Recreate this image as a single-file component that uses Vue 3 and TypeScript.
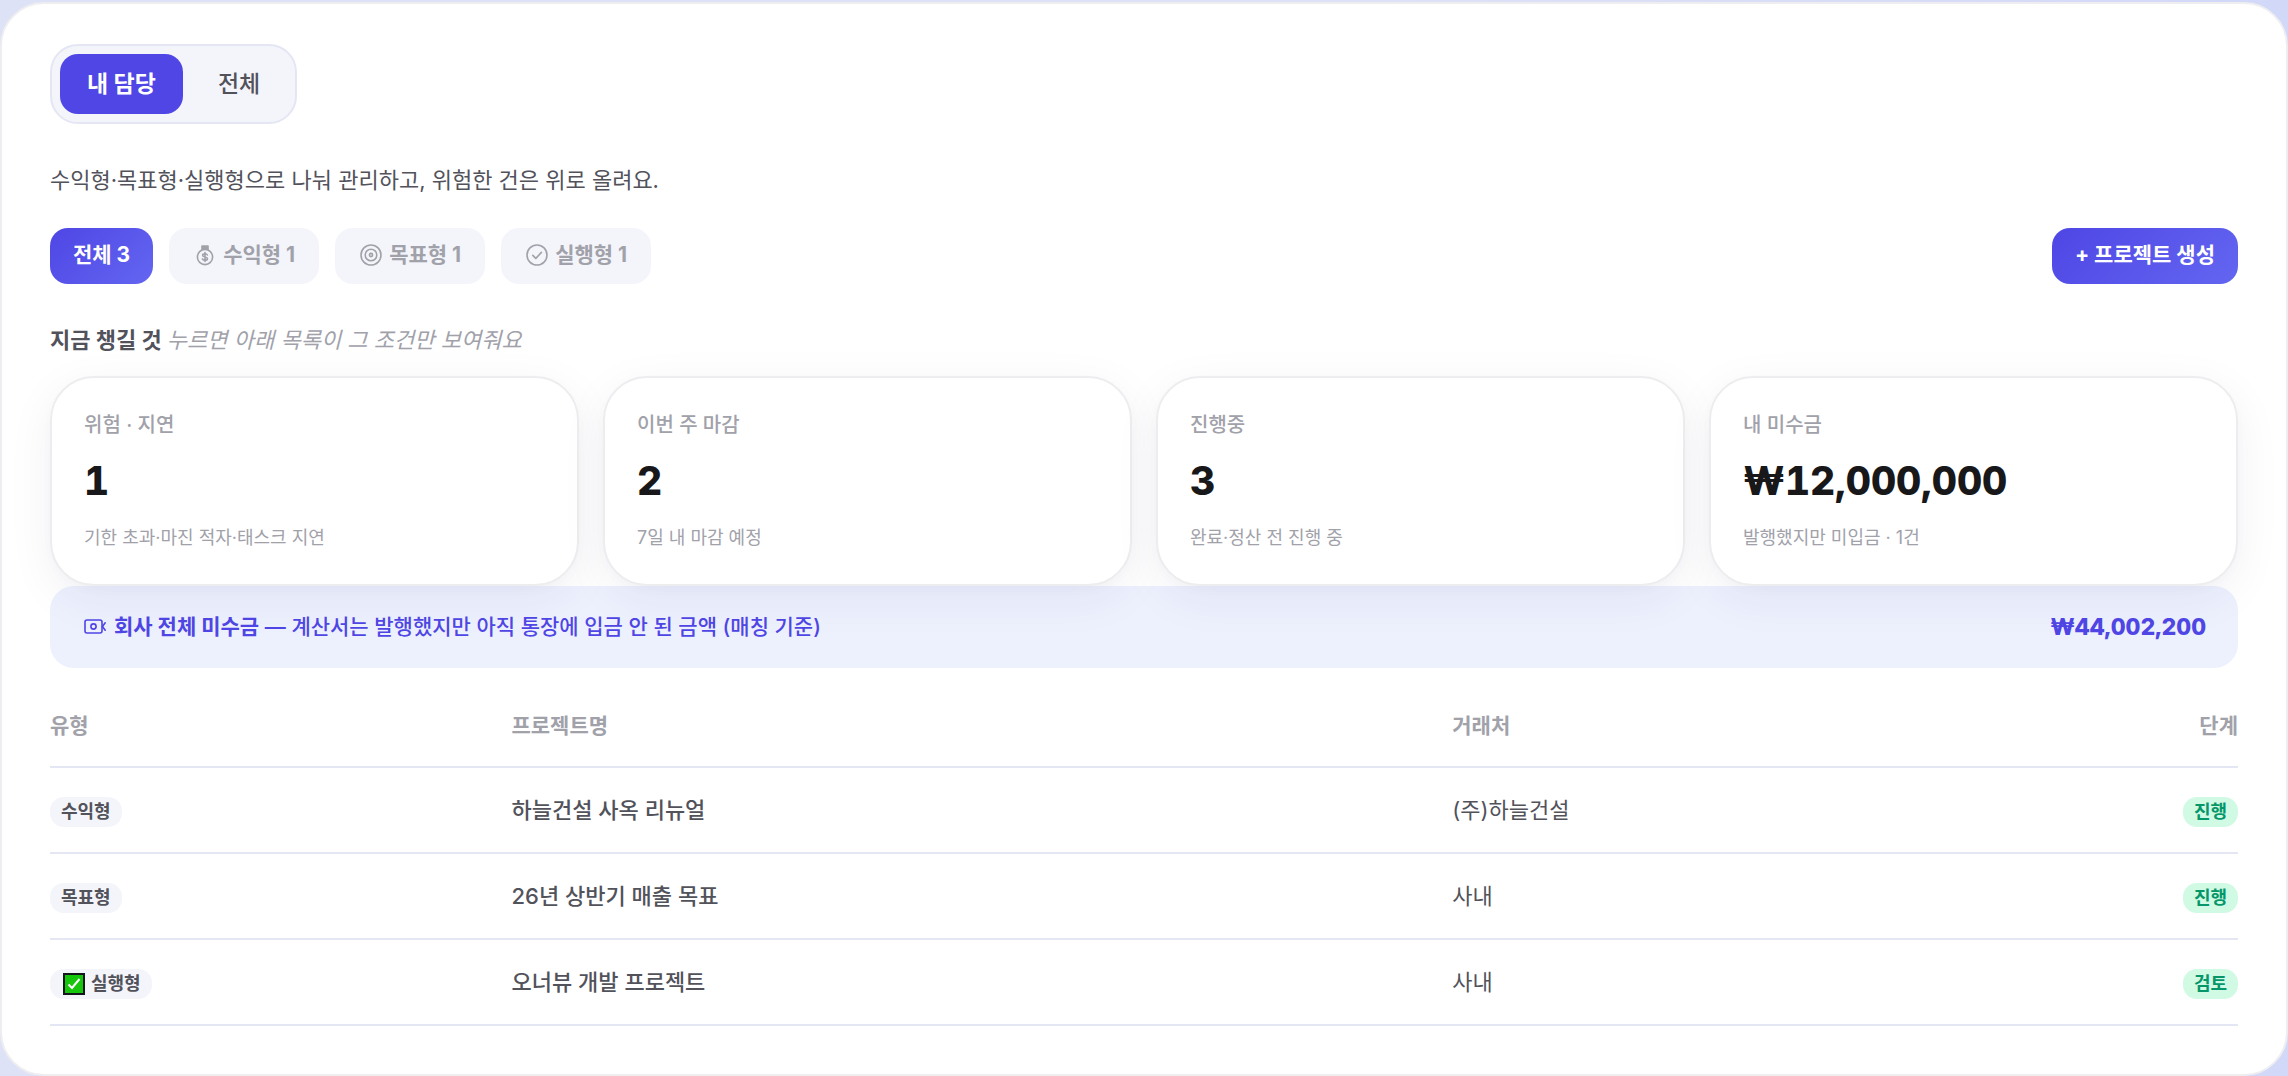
<script setup lang="ts">
import { ref } from 'vue'

type IconName = 'money' | 'target' | 'check'

interface Filter {
  label: string
  icon?: IconName
}

interface Stat {
  label: string
  value: string
  note: string
}

interface Project {
  kind: string
  name: string
  client: string
  stage: string
  done?: boolean
}

const scopes = ['내 담당', '전체']
const scope = ref(0)
const filter = ref(0)

const filters: Filter[] = [
  { label: '전체 3' },
  { label: '수익형 1', icon: 'money' },
  { label: '목표형 1', icon: 'target' },
  { label: '실행형 1', icon: 'check' },
]

const stats: Stat[] = [
  { label: '위험 · 지연', value: '1', note: '기한 초과·마진 적자·태스크 지연' },
  { label: '이번 주 마감', value: '2', note: '7일 내 마감 예정' },
  { label: '진행중', value: '3', note: '완료·정산 전 진행 중' },
  { label: '내 미수금', value: '₩12,000,000', note: '발행했지만 미입금 · 1건' },
]

const projects: Project[] = [
  { kind: '수익형', name: '하늘건설 사옥 리뉴얼', client: '(주)하늘건설', stage: '진행' },
  { kind: '목표형', name: '26년 상반기 매출 목표', client: '사내', stage: '진행' },
  { kind: '실행형', name: '오너뷰 개발 프로젝트', client: '사내', stage: '검토', done: true },
]
</script>

<template>
  <main class="panel">
    <div class="scope" role="group" aria-label="담당 범위">
      <button
        v-for="(item, i) in scopes"
        :key="item"
        type="button"
        class="scope-button"
        :class="{ active: scope === i }"
        @click="scope = i"
      >{{ item }}</button>
    </div>

    <p class="intro">수익형·목표형·실행형으로 나눠 관리하고, 위험한 건은 위로 올려요.</p>

    <div class="toolbar">
      <div class="filters">
        <button
          v-for="(item, i) in filters"
          :key="item.label"
          type="button"
          class="chip"
          :class="{ active: filter === i }"
          @click="filter = i"
        >
          <svg v-if="item.icon" class="chip-icon" viewBox="0 0 24 24" aria-hidden="true">
            <template v-if="item.icon === 'money'">
              <circle cx="12" cy="14" r="7.6" />
              <path d="M9 3h6v3.2H9z" fill="currentColor" />
              <path d="M14.4 12c-.5-1-1.4-1.3-2.4-1.3-1.4 0-2.4.6-2.4 1.6 0 2.4 4.9 1 4.9 3.4 0 1-1.1 1.6-2.5 1.6-1.2 0-2.1-.4-2.6-1.4M12 9.5v9" />
            </template>
            <template v-else-if="item.icon === 'target'">
              <circle cx="12" cy="12" r="10" />
              <circle cx="12" cy="12" r="5.8" />
              <circle cx="12" cy="12" r="1.6" />
            </template>
            <template v-else>
              <circle cx="12" cy="12" r="10" />
              <path d="m7.8 12.4 3 3 5.6-6" />
            </template>
          </svg>
          <span>{{ item.label }}</span>
        </button>
      </div>
      <button type="button" class="create">+ 프로젝트 생성</button>
    </div>

    <h2 class="heading">지금 챙길 것 <em>누르면 아래 목록이 그 조건만 보여줘요</em></h2>

    <div class="stats">
      <button v-for="stat in stats" :key="stat.label" type="button" class="stat">
        <span class="stat-label">{{ stat.label }}</span>
        <span class="stat-value">{{ stat.value }}</span>
        <span class="stat-note">{{ stat.note }}</span>
      </button>
    </div>

    <div class="banner">
      <svg class="banner-icon" viewBox="0 0 24 24" aria-hidden="true">
        <rect x="3" y="5" width="17" height="13" rx="2" />
        <circle cx="11.5" cy="11.5" r="2.6" />
        <path d="M23.2 7.8 20.5 11.5l2.7 3.7" />
      </svg>
      <p class="banner-text"><strong>회사 전체 미수금</strong> — 계산서는 발행했지만 아직 통장에 입금 안 된 금액 (매칭 기준)</p>
      <strong class="banner-value">₩44,002,200</strong>
    </div>

    <table class="projects">
      <colgroup>
        <col class="col-kind" />
        <col class="col-name" />
        <col class="col-client" />
        <col />
      </colgroup>
      <thead>
        <tr>
          <th scope="col">유형</th>
          <th scope="col" class="inset">프로젝트명</th>
          <th scope="col" class="inset">거래처</th>
          <th scope="col" class="end">단계</th>
        </tr>
      </thead>
      <tbody>
        <tr v-for="project in projects" :key="project.name">
          <td>
            <span class="tag">
              <svg v-if="project.done" class="tag-icon" viewBox="0 0 22 22" aria-hidden="true">
                <rect x="1" y="1" width="20" height="20" fill="#16c60c" stroke="#15151c" stroke-width="2" />
                <path d="m5.5 11.5 3.5 3.5L16.5 6" fill="none" stroke="#fff" stroke-width="2" />
              </svg>
              {{ project.kind }}
            </span>
          </td>
          <td class="inset name">{{ project.name }}</td>
          <td class="inset">{{ project.client }}</td>
          <td class="end"><span class="tag stage">{{ project.stage }}</span></td>
        </tr>
      </tbody>
    </table>
  </main>
</template>

<style>
body {
  background: linear-gradient(to right, #dee2f6 60%, #d2d8f8);
}
</style>

<style scoped>
.panel,
.panel * {
  box-sizing: border-box;
}

.panel {
  margin-top: 2px;
  padding: 40px 48px 48px;
  border: 2px solid #eeeef0;
  border-radius: 44px;
  background: #fff;
  color: #52525b;
  font-family: Inter, "Noto Sans CJK KR", sans-serif;
  font-size: 22px;
  line-height: 32px;
}

button {
  margin: 0;
  border: 0;
  font: inherit;
  color: inherit;
  cursor: pointer;
}

.scope {
  display: inline-flex;
  gap: 8px;
  padding: 8px;
  border: 2px solid #e4e6f3;
  border-radius: 28px;
  background: #f4f5fb;
}

.scope-button {
  height: 60px;
  padding: 0 27px;
  border-radius: 18px;
  background: none;
  font-size: 23px;
  font-weight: 500;
}

.scope-button.active {
  background: #4f46e5;
  color: #fff;
  font-weight: 700;
}

.intro {
  margin: 40px 0 32px;
}

.toolbar {
  display: flex;
  justify-content: space-between;
}

.filters {
  display: flex;
  gap: 16px;
}

.chip,
.create {
  display: flex;
  align-items: center;
  gap: 6px;
  height: 56px;
  padding: 0 24px 3px;
  border-radius: 18px;
  background: #f4f5fb;
  color: #a1a1aa;
  font-size: 21px;
  font-weight: 700;
}

.chip.active,
.create {
  padding: 0 23px 3px;
  background: linear-gradient(135deg, #4f46e5, #6366f1);
  color: #fff;
}

.chip-icon,
.banner-icon {
  width: 24px;
  height: 24px;
  fill: none;
  stroke: currentColor;
  stroke-width: 1.6;
  stroke-linecap: round;
  stroke-linejoin: round;
}

.heading {
  margin: 40px 0 20px;
  font-size: 22px;
  font-weight: 700;
}

.heading em {
  color: #a1a1aa;
  font-weight: 400;
}

.stats {
  position: relative;
  z-index: 1;
  display: grid;
  grid-template-columns: repeat(4, 1fr);
  gap: 24px;
}

.stat {
  display: flex;
  flex-direction: column;
  gap: 14px;
  padding: 33px 32px 31px;
  border: 2px solid #ededf0;
  border-radius: 44px;
  background: #fff;
  box-shadow: 0 4px 12px rgb(24 24 60 / 2%), 0 12px 48px rgb(24 24 80 / 6%);
  text-align: left;
}

.stat-label {
  color: #a1a1aa;
  font-size: 20px;
  font-weight: 500;
  line-height: 28px;
}

.stat-value {
  color: #18181b;
  font-size: 39px;
  font-weight: 800;
  font-variant-numeric: tabular-nums;
  line-height: 56px;
}

.stat-note {
  color: #a1a1aa;
  font-size: 18px;
  line-height: 30px;
}

.banner {
  display: flex;
  align-items: center;
  height: 82px;
  padding: 0 32px;
  border-radius: 24px;
  background: #edf1fe;
  color: #4f46e5;
}

.banner-text {
  flex: 1;
  margin: 0 0 0 8px;
  font-size: 21px;
  font-weight: 500;
}

.banner-value {
  font-size: 23px;
  font-weight: 800;
  font-variant-numeric: tabular-nums;
}

.projects {
  width: 100%;
  margin-top: 16px;
  border-collapse: separate;
  border-spacing: 0;
  table-layout: fixed;
}

.col-kind {
  width: 21%;
}

.col-name {
  width: 43%;
}

.col-client {
  width: 18%;
}

th,
td {
  height: 86px;
  padding: 0;
  border-bottom: 2px solid #e4e6f3;
  text-align: left;
}

th {
  height: 84px;
  padding-top: 2px;
  color: #a1a1aa;
  font-size: 21px;
  font-weight: 600;
}

.inset {
  padding-left: 2px;
}

.end {
  text-align: right;
}

.name {
  font-weight: 500;
}

.tag {
  display: inline-flex;
  align-items: center;
  gap: 6px;
  height: 30px;
  padding: 0 11px;
  border-radius: 14px;
  background: #f4f5fb;
  font-size: 18px;
  font-weight: 600;
  vertical-align: middle;
}

.tag-icon {
  width: 22px;
  height: 22px;
  margin-left: 2px;
}

.stage {
  background: #d1fae5;
  color: #059669;
  font-weight: 700;
}
</style>
